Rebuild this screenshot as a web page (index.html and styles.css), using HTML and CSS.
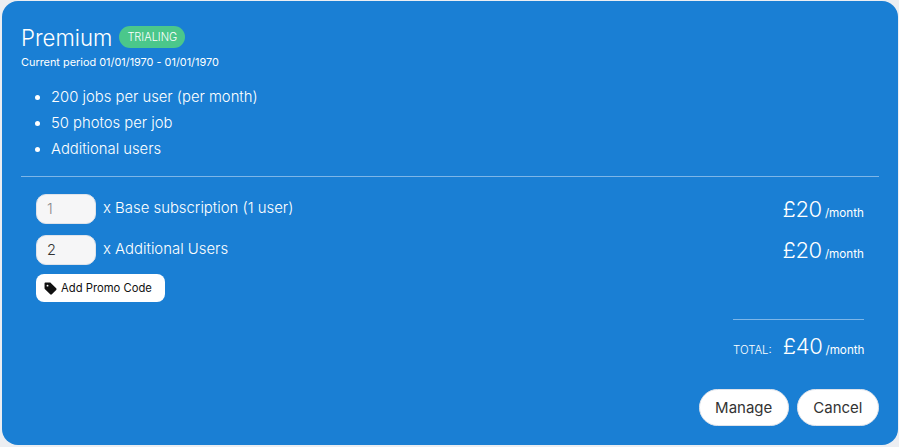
FILE: index.html
```html
<!DOCTYPE html>
<html>
  <head>
    <link rel="stylesheet" href="styles.css">
  </head>
  <body>
    <div class="plan-card">
      <div class="plan-title">
        <h2>Premium</h2>
        <span class="status-badge">TRIALING</span>
      </div>
      <div class="plan-period">Current period 01/01/1970 - 01/01/1970</div>

      <ul class="plan-features">
        <li>200 jobs per user (per month)</li>
        <li>50 photos per job</li>
        <li>Additional users</li>
      </ul>

      <hr class="divider">

      <div class="line-items">
        <div class="line-item">
          <div class="qty muted">1</div>
          <span class="line-label">x Base subscription (1 user)</span>
          <div class="price"><strong>£20</strong> <small>/month</small></div>
        </div>
        <div class="line-item">
          <div class="qty">2</div>
          <span class="line-label">x Additional Users</span>
          <div class="price"><strong>£20</strong> <small>/month</small></div>
        </div>
        <button class="promo-button">
          <svg width="13" height="13" viewBox="0 0 24 24"><path fill="#111" d="M1 2.500A1.500 1.500 0 0 1 2.500 1h8.400c.6 0 1.200.2 1.600.7l10 10c.9.9.9 2.200 0 3.100l-8 8c-.9.9-2.200.9-3.100 0l-10-10C1 12.300 1 11.700 1 11.100zM6.500 5A1.700 1.700 0 1 0 6.500 8.400 1.700 1.700 0 0 0 6.500 5z"/></svg>
          Add Promo Code
        </button>
      </div>

      <div class="total">
        <hr class="total-rule">
        <div class="price"><span class="total-label">TOTAL:</span><strong>£40</strong> <small>/month</small></div>
      </div>

      <div class="actions">
        <button class="pill-button">Manage</button>
        <button class="pill-button">Cancel</button>
      </div>
    </div>
  </body>
</html>
```

FILE: styles.css
```css
html, body {
  height: 100%;
}

body {
  margin: 0;
  padding: 1px 1px 2px 2px;
  box-sizing: border-box;
  background-color: #eceef2;
  font-family: "Inter", "Liberation Sans", sans-serif;
  color: white;
}

.plan-card {
  height: 100%;
  box-sizing: border-box;
  padding: 22px 19px 19px 19px;
  background-color: #1a7fd4;
  border-radius: 16px;
  display: flex;
  flex-direction: column;
}

.plan-title {
  display: flex;
  align-items: center;
  gap: 7px;
  height: 28px;
}

.plan-title h2 {
  margin: 0;
  font-size: 22.2px;
  font-weight: 300;
}

.status-badge {
  padding: 0 8px;
  height: 22px;
  line-height: 22px;
  font-size: 11px;
  font-weight: 300;
  border-radius: 11px;
  background-color: #4bc78b;
}

.plan-period {
  margin-top: 3px;
  font-size: 10.9px;
  font-weight: 400;
  line-height: 16px;
}

.plan-features {
  margin: 14px 0 0 0;
  padding-left: 30px;
  font-size: 14.8px;
  font-weight: 300;
}

.plan-features li {
  height: 26px;
  line-height: 26px;
}

.divider {
  width: 100%;
  margin: 14px 0 0 0;
  border: none;
  border-top: 1px solid #7db6e8;
}

.line-items {
  margin-top: 17px;
  padding: 0 15px;
  display: flex;
  flex-direction: column;
  gap: 11px;
  align-items: flex-start;
}

.line-item {
  width: 100%;
  display: flex;
  align-items: center;
  height: 30px;
}

.qty {
  width: 60px;
  height: 30px;
  box-sizing: border-box;
  padding-left: 10px;
  line-height: 28px;
  font-size: 14.5px;
  font-weight: 300;
  color: #333;
  background-color: #f6f6f7;
  border: 1px solid #dfe3ea;
  border-radius: 10px;
}

.muted {
  color: #888;
}

.line-label {
  margin-left: 7px;
  margin-bottom: 2px;
  font-size: 14.9px;
  font-weight: 300;
}

.price {
  margin-left: auto;
  font-size: 11px;
  font-weight: 300;
  text-align: right;
  white-space: nowrap;
}

.price strong {
  font-size: 22px;
  font-weight: 300;
  letter-spacing: -0.4px;
}

.price small {
  font-size: 11.7px;
  font-weight: 400;
}

.promo-button {
  display: flex;
  align-items: center;
  gap: 4px;
  height: 28px;
  margin-top: -2px;
  padding: 0 13px 0 8px;
  border: none;
  border-radius: 8px;
  background-color: white;
  color: #111;
  font-family: inherit;
  font-size: 11.25px;
}

.total {
  align-self: flex-end;
  width: 131px;
  margin-right: 15px;
  margin-top: 17px;
}

.total-rule {
  margin: 0 0 13px 0;
  border: none;
  border-top: 1px solid #7db6e8;
}

.total-label {
  margin-right: 11px;
  font-size: 11.4px;
}

.actions {
  margin-top: auto;
  display: flex;
  justify-content: flex-end;
  gap: 8px;
}

.pill-button {
  height: 37px;
  padding: 0 15.5px;
  border: 1px solid #dfe3ea;
  border-radius: 19px;
  background-color: white;
  color: #333;
  font-family: inherit;
  font-size: 15px;
}
```
